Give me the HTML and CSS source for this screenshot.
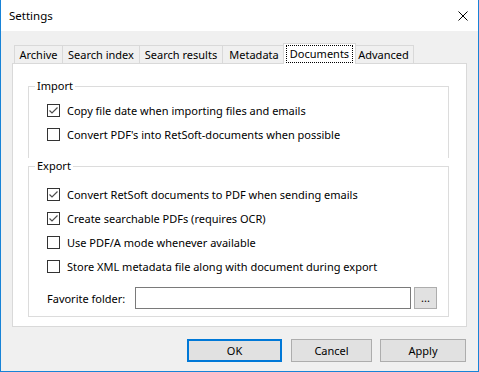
FILE: index.html
```html
<!DOCTYPE html>
<html lang="en">
<head>
    <meta charset="UTF-8">
    <title>Settings</title>
    <link rel="stylesheet" href="styles.css">
</head>
<body>
    <div class="window">
        <div class="titlebar">
            <span class="title">Settings</span>
            <svg class="close" width="10" height="10" viewBox="0 0 10 10">
                <path d="M0.5 0.5 L9.5 9.5 M9.5 0.5 L0.5 9.5" stroke="#000" stroke-width="1"/>
            </svg>
        </div>

        <div class="content">
            <div class="tabs">
                <div class="tab tab-archive">Archive</div>
                <div class="tab tab-index">Search index</div>
                <div class="tab tab-results">Search results</div>
                <div class="tab tab-meta">Metadata</div>
                <div class="tab tab-docs active"><span class="focus">Documents</span></div>
                <div class="tab tab-adv">Advanced</div>
            </div>

            <div class="panel">
                <fieldset class="group group-import">
                    <legend>Import</legend>
                    <div class="row">
                        <span class="check checked"><svg width="11" height="11" viewBox="0 0 11 11"><path d="M1.5 5.5 L4 8 L9.5 2.5" fill="none" stroke="#4d4d4d" stroke-width="1.2"/></svg></span>
                        <span>Copy file date when importing files and emails</span>
                    </div>
                    <div class="row">
                        <span class="check"></span>
                        <span>Convert PDF's into RetSoft-documents when possible</span>
                    </div>
                </fieldset>

                <fieldset class="group group-export">
                    <legend>Export</legend>
                    <div class="row">
                        <span class="check checked"><svg width="11" height="11" viewBox="0 0 11 11"><path d="M1.5 5.5 L4 8 L9.5 2.5" fill="none" stroke="#4d4d4d" stroke-width="1.2"/></svg></span>
                        <span>Convert RetSoft documents to PDF when sending emails</span>
                    </div>
                    <div class="row">
                        <span class="check checked"><svg width="11" height="11" viewBox="0 0 11 11"><path d="M1.5 5.5 L4 8 L9.5 2.5" fill="none" stroke="#4d4d4d" stroke-width="1.2"/></svg></span>
                        <span>Create searchable PDFs (requires OCR)</span>
                    </div>
                    <div class="row">
                        <span class="check"></span>
                        <span>Use PDF/A mode whenever available</span>
                    </div>
                    <div class="row">
                        <span class="check"></span>
                        <span>Store XML metadata file along with document during export</span>
                    </div>
                    <div class="folder-row">
                        <span class="folder-label">Favorite folder:</span>
                        <div class="folder-input"></div>
                        <div class="browse">...</div>
                    </div>
                </fieldset>
            </div>

            <div class="buttons">
                <div class="btn btn-ok">OK</div>
                <div class="btn btn-cancel">Cancel</div>
                <div class="btn btn-apply">Apply</div>
            </div>
        </div>
    </div>
</body>
</html>
```

FILE: styles.css
```css
/* General */
* {
    margin: 0;
    padding: 0;
    box-sizing: border-box;
}

body {
    background: #fff;
    font-family: 'Noto Sans', 'Liberation Sans', sans-serif;
    font-size: 11px;
    color: #000;
}

.window {
    width: 479px;
    height: 372px;
    background: #f0f0f0;
    border: 1px solid #1883d7;
    border-top: none;
}

/* Title bar */
.titlebar {
    height: 31px;
    background: #fff;
    display: flex;
    align-items: center;
    justify-content: space-between;
    padding: 0 10px 0 8px;
}

.title {
    font-size: 11.5px;
}

/* Content */
.content {
    padding: 12px 11px 0 11px;
}

/* Tabs */
.tabs {
    display: flex;
    align-items: flex-end;
    padding-left: 2px;
}

.tab {
    height: 18px;
    line-height: 18px;
    text-align: center;
    background: #f0f0f0;
    border: 1px solid #d9d9d9;
    border-bottom: none;
    margin-left: -1px;
    white-space: nowrap;
}

.tab-archive { width: 49px; margin-left: 0; }
.tab-index { width: 78px; }
.tab-results { width: 84px; }
.tab-meta { width: 64px; }
.tab-adv { width: 61px; }

.tab.active {
    width: 73px;
    height: 21px;
    margin-left: -3px;
    margin-right: -2px;
    margin-bottom: -1px;
    background: #fff;
    position: relative;
    z-index: 1;
    padding-top: 1px;
    line-height: 16px;
}

.focus {
    display: inline-block;
    border: 1px dotted #000;
    padding: 0 3px;
    line-height: 16px;
}

/* Panel */
.panel {
    height: 264px;
    background: #fff;
    border: 1px solid #d9d9d9;
    padding: 14px 17px 0 15px;
}

.group {
    border: 1px solid #dcdcdc;
    padding: 0 0 0 18px;
}

.group legend {
    margin-left: -12px;
    padding: 0 2px;
    line-height: 16px;
}

.group-import {
    border-bottom: none;
    padding-top: 4px;
    padding-bottom: 12px;
}

.group-export {
    padding-top: 8px;
    padding-bottom: 7px;
}

.row {
    height: 24px;
    display: flex;
    align-items: center;
    gap: 7px;
}

.check {
    width: 13px;
    height: 13px;
    border: 1px solid #333;
    background: #fff;
    display: flex;
    align-items: center;
    justify-content: center;
}

.folder-row {
    display: flex;
    align-items: center;
    margin-top: 9px;
    height: 22px;
}

.folder-label {
    width: 88px;
}

.folder-input {
    width: 276px;
    height: 22px;
    border: 1px solid #7a7a7a;
    background: #fff;
}

.browse {
    width: 23px;
    height: 22px;
    margin-left: 3px;
    border: 1px solid #adadad;
    background: #e1e1e1;
    text-align: center;
    line-height: 20px;
}

/* Buttons */
.buttons {
    display: flex;
    justify-content: flex-end;
    margin-top: 12px;
    padding-right: 1px;
}

.btn {
    height: 23px;
    border: 1px solid #adadad;
    background: #e1e1e1;
    text-align: center;
    line-height: 21px;
}

.btn-ok {
    width: 95px;
    border: 2px solid #0078d7;
    line-height: 19px;
}

.btn-cancel {
    width: 81px;
    margin-left: 9px;
}

.btn-apply {
    width: 86px;
    margin-left: 8px;
}
```
